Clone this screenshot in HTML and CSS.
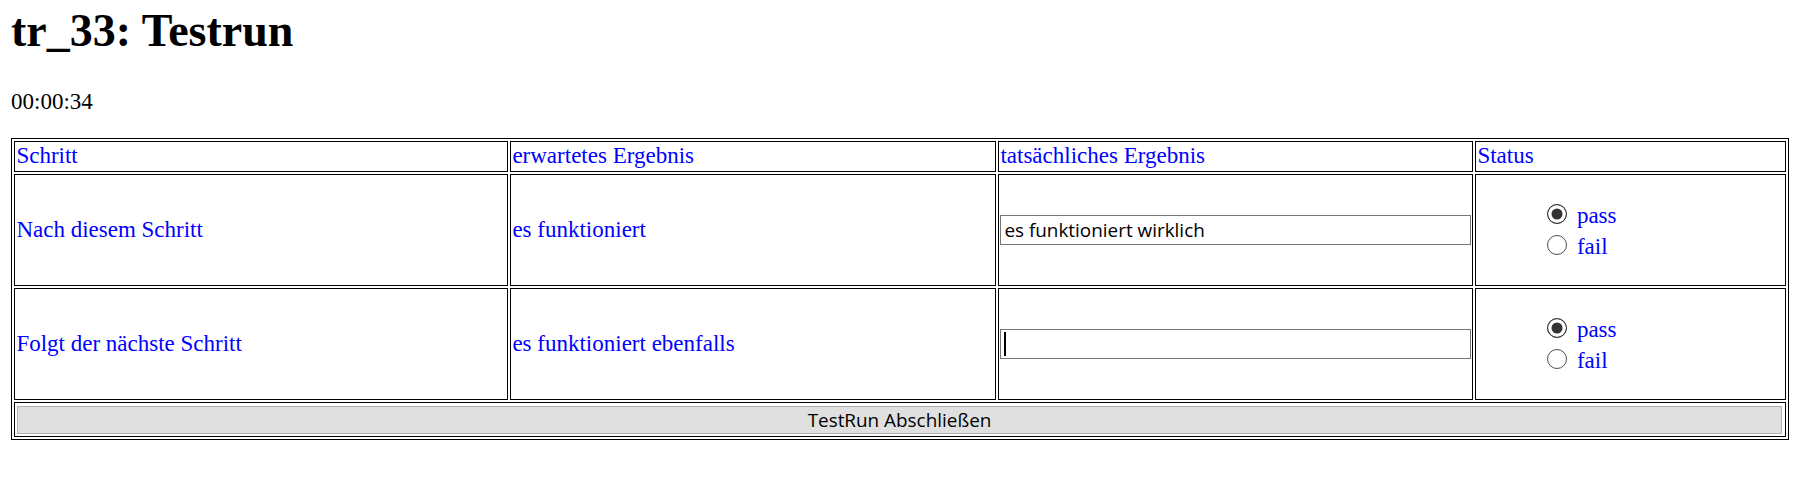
FILE: index.html
```html
<!DOCTYPE html>
<html lang="de">
<head>
<meta charset="utf-8">
<title>tr_33: Testrun</title>
<link rel="stylesheet" href="styles.css">
</head>
<body class="page">
<h1 class="title">tr_33: Testrun</h1>
<p class="timer">00:00:34</p>
<table class="run">
  <tr class="head-row">
    <td class="cell cell-head col-step">Schritt</td>
    <td class="cell cell-head col-expected">erwartetes Ergebnis</td>
    <td class="cell cell-head col-actual">tatsächliches Ergebnis</td>
    <td class="cell cell-head col-status">Status</td>
  </tr>
  <tr class="step-row">
    <td class="cell">Nach diesem Schritt</td>
    <td class="cell">es funktioniert</td>
    <td class="cell"><span class="field"><input class="result" type="text" value="es funktioniert wirklich"></span></td>
    <td class="cell">
      <div class="status">
        <label class="opt"><input class="radio" type="radio" name="s1" checked><span class="opt-text">pass</span></label>
        <label class="opt"><input class="radio" type="radio" name="s1"><span class="opt-text">fail</span></label>
      </div>
    </td>
  </tr>
  <tr class="step-row">
    <td class="cell">Folgt der nächste Schritt</td>
    <td class="cell">es funktioniert ebenfalls</td>
    <td class="cell"><span class="field field-focused"><input class="result" type="text" value=""></span></td>
    <td class="cell">
      <div class="status">
        <label class="opt"><input class="radio" type="radio" name="s2" checked><span class="opt-text">pass</span></label>
        <label class="opt"><input class="radio" type="radio" name="s2"><span class="opt-text">fail</span></label>
      </div>
    </td>
  </tr>
  <tr class="foot-row">
    <td class="cell cell-button" colspan="4"><button class="finish" type="button">TestRun Abschließen</button></td>
  </tr>
</table>
</body>
</html>
```
FILE: styles.css
```css
html, body {
  background: #ffffff;
}
.page {
  margin: 0 11px;
  padding-top: 4px;
  font-family: "Liberation Serif", "Times New Roman", serif;
  font-size: 23px;
  color: #000000;
}
.title {
  margin: 0 0 32px;
  font-size: 46px;
  font-weight: bold;
}
.timer {
  margin: 0 0 23px;
}
.run {
  width: 100%;
  table-layout: fixed;
  border: 1px solid #000000;
  border-collapse: separate;
  border-spacing: 2.75px;
}
.cell {
  box-sizing: border-box;
  border: 1px solid #000000;
  padding: 1px 1.4px;
  color: #0000ff;
  vertical-align: middle;
  text-align: left;
}
.cell-head {
  padding-top: 1.3px;
  padding-bottom: 1.3px;
}
.col-step { width: 494px; }
.col-expected { width: 486px; }
.col-actual { width: 475px; }
.field {
  position: relative;
  display: block;
}
.field-focused::after {
  content: "";
  position: absolute;
  left: 4px;
  top: 3px;
  bottom: 3px;
  width: 1.5px;
  background: #000000;
}
.result {
  box-sizing: border-box;
  display: block;
  width: 100%;
  height: 30px;
  margin: 0;
  padding: 0 3px;
  border: 1px solid #767676;
  border-radius: 0;
  font-family: "Open Sans", "Liberation Sans", sans-serif;
  font-size: 18.9px;
  color: #000000;
  background: #ffffff;
}
.result:focus {
  outline: none;
}
.status {
  display: flex;
  flex-direction: column;
  margin: 23px 0;
  padding-left: 69.5px;
}
.opt {
  display: flex;
  align-items: center;
  height: 31px;
  gap: 10px;
}
.radio {
  appearance: none;
  -webkit-appearance: none;
  box-sizing: border-box;
  width: 20px;
  height: 20px;
  margin: 0;
  border: 1.5px solid #4d4d4d;
  border-radius: 50%;
  background: #ffffff;
}
.radio:checked {
  border-color: #333333;
  background: #333333;
  box-shadow: inset 0 0 0 3.5px #ffffff;
}
.opt-text {
  padding-top: 4px;
  color: #0000ff;
}
.cell-button {
  padding: 3px 3px 2px 2px;
}
.finish {
  display: block;
  box-sizing: border-box;
  width: 100%;
  height: 28px;
  margin: 0;
  padding: 0;
  border: 1px solid #b0b0b0;
  border-radius: 0;
  background: #e0e0e0;
  font-family: "Open Sans", "Liberation Sans", sans-serif;
  font-size: 18.9px;
  color: #000000;
}
```
